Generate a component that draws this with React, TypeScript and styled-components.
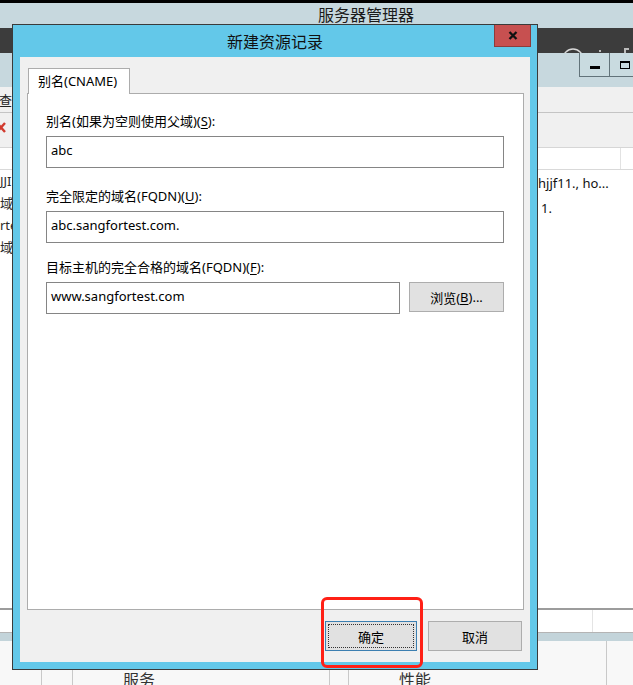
import React from 'react';
import styled, { createGlobalStyle } from 'styled-components';

const GlobalStyle = createGlobalStyle`
  html, body {
    margin: 0;
    padding: 0;
    background: #c7d8de;
  }
  body {
    font-family: "Noto Sans", "Noto Sans CJK SC", sans-serif;
    overflow: hidden;
  }
  * {
    box-sizing: border-box;
  }
`;

const App = () => {
  return (
    <>
      <GlobalStyle />
      <Screen>
        <TopEdge />
        <AppTitle>服务器管理器</AppTitle>
        <CommandBar>
          <svg width="22" height="5" viewBox="0 0 22 5">
            <path d="M1 11 A10 10 0 0 1 21 11" stroke="#d8d8d8" strokeWidth="1.4" fill="none" />
          </svg>
          <Dot />
          <FlagStub />
        </CommandBar>
        <WindowBar>
          <CaptionButton>
            <MinGlyph />
          </CaptionButton>
          <CaptionButton>
            <MaxGlyph />
          </CaptionButton>
        </WindowBar>
        <MenuBar>
          <MenuText>查看</MenuText>
        </MenuBar>
        <FilterBar>
          <svg width="10" height="11" viewBox="0 0 10 11" style={{ marginLeft: -4 }}>
            <path d="M1 1 L9 10 M9 1 L1 10" stroke="#d13b2f" strokeWidth="2.4" />
          </svg>
          <FilterBox />
        </FilterBar>
        <HeaderRow>
          <HeaderDivider />
        </HeaderRow>
        <DataArea>
          <TreePane>
            {leftRows.map((text, i) => (
              <TreeRow key={i}>{text}</TreeRow>
            ))}
          </TreePane>
          <ListPane>
            {rightRows.map((text, i) => (
              <ListRow key={i} indent={i === 1 ? 3 : 0}>
                {text}
              </ListRow>
            ))}
          </ListPane>
        </DataArea>
        <StatusRow>
          <StatusDivider />
        </StatusRow>
        <SplitBar />
        <BottomPanel>
          <PanelCol />
          <PanelCol />
          <PanelCol>
            <PanelTitle>服务</PanelTitle>
          </PanelCol>
          <PanelCol />
          <PanelCol>
            <PanelTitle>性能</PanelTitle>
          </PanelCol>
          <PanelCol />
        </BottomPanel>

        <Dialog>
          <TitleBar>
            新建资源记录
            <CloseButton>
              <svg width="10" height="9" viewBox="0 0 10 9">
                <path d="M1.5 1 L8.5 8 M8.5 1 L1.5 8" stroke="#111" strokeWidth="2.3" />
              </svg>
            </CloseButton>
          </TitleBar>
          <Client>
            <TabRow>
              <Tab>别名(CNAME)</Tab>
            </TabRow>
            <TabPage>
              <Field spaceAbove={19}>
                <Label>
                  别名(如果为空则使用父域)(<u>S</u>):
                </Label>
                <TextBox>abc</TextBox>
              </Field>
              <Field spaceAbove={20}>
                <Label>
                  完全限定的域名(FQDN)(<u>U</u>):
                </Label>
                <TextBox>abc.sangfortest.com.</TextBox>
              </Field>
              <Field spaceAbove={16}>
                <Label>
                  目标主机的完全合格的域名(FQDN)(<u>F</u>):
                </Label>
                <FieldRow>
                  <TextBox>www.sangfortest.com</TextBox>
                  <PushButton width={95}>
                    浏览(<u>B</u>)...
                  </PushButton>
                </FieldRow>
              </Field>
            </TabPage>
            <ButtonRow>
              <PushButton width={92} isDefault>
                <FocusRect>确定</FocusRect>
              </PushButton>
              <PushButton width={94}>取消</PushButton>
            </ButtonRow>
          </Client>
        </Dialog>

        <Highlight />
      </Screen>
    </>
  );
};

const leftRows = ['JJI', '域', 'rte', '域'];
const rightRows = ['hjjf11., ho...', '1.'];

const Screen = styled.div`
  position: relative;
  width: 633px;
  height: 685px;
  overflow: hidden;
  display: flex;
  flex-direction: column;
  background: #ffffff;
`;

const TopEdge = styled.div`
  flex: none;
  height: 3px;
  background: #000000;
`;

const AppTitle = styled.div`
  flex: none;
  height: 25px;
  padding-left: 318px;
  background: #c7d8de;
  color: #1b1b1b;
  font-size: 16px;
  line-height: 24px;
  white-space: nowrap;
`;

const CommandBar = styled.div`
  flex: none;
  height: 25px;
  display: flex;
  align-items: flex-end;
  padding-left: 562px;
  background: #3c3c3c;
  svg {
    display: block;
  }
`;

const Dot = styled.div`
  width: 2px;
  height: 2px;
  margin: 0 0 1px 15px;
  background: #bbbbbb;
`;

const FlagStub = styled.div`
  width: 5px;
  height: 5px;
  margin-left: 23px;
  border-left: 2px solid #bcbcbc;
  border-top: 2px solid #bcbcbc;
`;

const WindowBar = styled.div`
  flex: none;
  height: 34px;
  display: flex;
  align-items: flex-start;
  padding-left: 579px;
  background: #c7d8de;
`;

const CaptionButton = styled.div`
  flex: none;
  width: 31px;
  height: 24px;
  margin-right: -1px;
  display: flex;
  align-items: center;
  justify-content: center;
  border: 1px solid #62737a;
  border-top: none;
  background: #c9dbe0;
`;

const MinGlyph = styled.div`
  width: 10px;
  height: 3px;
  margin-top: 6px;
  background: #000000;
`;

const MaxGlyph = styled.div`
  width: 10px;
  height: 8px;
  border: 1px solid #000000;
  border-top-width: 2px;
`;

const MenuBar = styled.div`
  flex: none;
  height: 26px;
  display: flex;
  align-items: center;
  background: #f0f0f0;
  border-bottom: 1px solid #c4c4c4;
`;

const MenuText = styled.span`
  margin-left: -1px;
  font-size: 13px;
  color: #222222;
  white-space: nowrap;
`;

const FilterBar = styled.div`
  flex: none;
  height: 35px;
  display: flex;
  align-items: flex-start;
  gap: 8px;
  padding-top: 9px;
  background: #f0f0f0;
  border-bottom: 1px solid #d6d6d6;
`;

const FilterBox = styled.div`
  width: 3px;
  height: 13px;
  border: 1px solid #b0b0b0;
  border-right: none;
  background: #ffffff;
`;

const HeaderRow = styled.div`
  flex: none;
  height: 22px;
  display: flex;
  padding-left: 620px;
  background: #ffffff;
  border-bottom: 1px solid #d9d9d9;
`;

const HeaderDivider = styled.div`
  width: 1px;
  background: #e2e2e2;
`;

const DataArea = styled.div`
  flex: 1;
  display: flex;
  background: #ffffff;
`;

const TreePane = styled.div`
  width: 538px;
  display: flex;
  flex-direction: column;
`;

const TreeRow = styled.div`
  height: 22px;
  line-height: 22px;
  font-size: 13px;
  color: #2a2a2a;
  white-space: nowrap;
`;

const ListPane = styled.div`
  flex: 1;
  padding-top: 1px;
  display: flex;
  flex-direction: column;
`;

const ListRow = styled.div<{ indent: number }>`
  height: 25px;
  line-height: 25px;
  padding-left: ${(p) => p.indent}px;
  font-size: 13px;
  color: #111111;
  white-space: nowrap;
`;

const StatusRow = styled.div`
  flex: none;
  height: 25px;
  display: flex;
  padding-left: 592px;
  background: #ffffff;
  border-top: 2px solid #9c9c9c;
  border-bottom: 1px solid #b4b4b4;
`;

const StatusDivider = styled.div`
  width: 1px;
  background: #e4e4e4;
`;

const SplitBar = styled.div`
  flex: none;
  height: 8px;
  background: #c3d4da;
`;

const BottomPanel = styled.div`
  flex: none;
  height: 44px;
  display: grid;
  grid-template-columns: 42px 31px 257px 19px 258px 1fr;
  background: #f8f8f8;
`;

const PanelCol = styled.div`
  border-right: 1px solid #c9c9c9;
  &:last-child {
    border-right: none;
  }
`;

const PanelTitle = styled.div`
  padding: 29px 0 0 50px;
  font-size: 16px;
  line-height: 20px;
  color: #333333;
  white-space: nowrap;
`;

const Dialog = styled.div`
  position: absolute;
  left: 12px;
  top: 24px;
  width: 526px;
  height: 646px;
  display: flex;
  flex-direction: column;
  padding: 0 7px 7px 7px;
  background: #63c8e9;
  border: 1px solid #3a3a3a;
`;

const TitleBar = styled.div`
  position: relative;
  flex: none;
  height: 32px;
  display: flex;
  align-items: center;
  justify-content: center;
  padding-bottom: 1px;
  font-size: 16px;
  color: #111111;
`;

const CloseButton = styled.div`
  position: absolute;
  top: 0;
  right: -1px;
  width: 37px;
  height: 22px;
  display: flex;
  align-items: center;
  justify-content: center;
  background: #c75050;
  border: 1px solid #8e3b3b;
  border-top: none;
  svg {
    display: block;
  }
`;

const Client = styled.div`
  flex: 1;
  display: flex;
  flex-direction: column;
  padding: 11px 6px 0 7px;
  background: #f0f0f0;
`;

const TabRow = styled.div`
  flex: none;
  height: 25px;
  display: flex;
  padding-left: 1px;
`;

const Tab = styled.div`
  position: relative;
  z-index: 1;
  width: 102px;
  height: 26px;
  padding-left: 9px;
  line-height: 25px;
  font-size: 13px;
  color: #000000;
  background: #ffffff;
  border: 1px solid #acacac;
  border-bottom: none;
  white-space: nowrap;
`;

const TabPage = styled.div`
  flex: 1;
  display: flex;
  flex-direction: column;
  padding: 0 19px 0 18px;
  background: #ffffff;
  border: 1px solid #acacac;
`;

const Field = styled.div<{ spaceAbove: number }>`
  display: flex;
  flex-direction: column;
  gap: 7px;
  margin-top: ${(p) => p.spaceAbove}px;
`;

const Label = styled.div`
  height: 16px;
  line-height: 16px;
  font-size: 13px;
  color: #000000;
  white-space: nowrap;
  u {
    text-underline-offset: 2px;
  }
`;

const TextBox = styled.div`
  flex: none;
  height: 32px;
  padding: 4px 5px 0 4px;
  line-height: 18px;
  font-size: 13px;
  color: #000000;
  background: #ffffff;
  border: 1px solid #858585;
  white-space: nowrap;
`;

const FieldRow = styled.div`
  display: flex;
  gap: 9px;
  & > ${TextBox} {
    flex: 1;
  }
`;

const PushButton = styled.div<{ width: number; isDefault?: boolean }>`
  flex: none;
  width: ${(p) => p.width}px;
  height: 30px;
  display: flex;
  align-items: center;
  justify-content: center;
  padding: ${(p) => (p.isDefault ? '2px' : '0')};
  font-size: 13px;
  color: #000000;
  background: #e1e1e1;
  border: 1px solid ${(p) => (p.isDefault ? '#3c7fb1' : '#adadad')};
  white-space: nowrap;
  u {
    text-underline-offset: 2px;
  }
`;

const FocusRect = styled.div`
  width: 100%;
  height: 100%;
  display: flex;
  align-items: center;
  justify-content: center;
  border: 1px dotted #333333;
`;

const ButtonRow = styled.div`
  flex: none;
  height: 52px;
  display: flex;
  justify-content: flex-end;
  align-items: flex-start;
  gap: 11px;
  padding: 11px 2px 0 0;
`;

const Highlight = styled.div`
  position: absolute;
  left: 321px;
  top: 597px;
  width: 102px;
  height: 71px;
  border: 3px solid #ff2016;
  border-radius: 6px;
`;

export default App;
